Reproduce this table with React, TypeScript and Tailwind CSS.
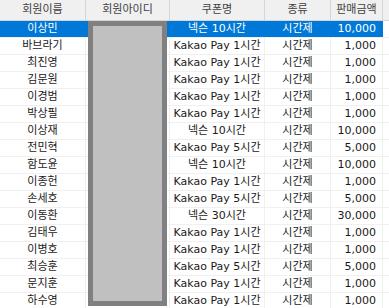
import React from "react";

const rows: [string, string, string, string][] = [
  ["이상민", "넥슨 10시간", "시간제", "10,000"],
  ["바브라기", "Kakao Pay 1시간", "시간제", "1,000"],
  ["최진영", "Kakao Pay 1시간", "시간제", "1,000"],
  ["김문원", "Kakao Pay 1시간", "시간제", "1,000"],
  ["이경범", "Kakao Pay 1시간", "시간제", "1,000"],
  ["박상필", "Kakao Pay 1시간", "시간제", "1,000"],
  ["이상재", "넥슨 10시간", "시간제", "10,000"],
  ["전민혁", "Kakao Pay 5시간", "시간제", "5,000"],
  ["함도윤", "넥슨 10시간", "시간제", "10,000"],
  ["이종헌", "Kakao Pay 1시간", "시간제", "1,000"],
  ["손세호", "Kakao Pay 5시간", "시간제", "5,000"],
  ["이동환", "넥슨 30시간", "시간제", "30,000"],
  ["김태우", "Kakao Pay 1시간", "시간제", "1,000"],
  ["이병호", "Kakao Pay 1시간", "시간제", "1,000"],
  ["최승훈", "Kakao Pay 5시간", "시간제", "5,000"],
  ["문지훈", "Kakao Pay 1시간", "시간제", "1,000"],
  ["하수영", "Kakao Pay 1시간", "시간제", "1,000"],
];

const font = { fontFamily: '"DejaVu Sans", "Noto Sans CJK KR", sans-serif' };

export default function App() {
  return (
    <div
      className="relative w-[389px] h-[308px] overflow-hidden bg-white text-[11px] text-[#1a1a1a]"
      style={font}
    >
      <div className="flex h-[21px] bg-[#f0f0f0] border-b border-[#d5d5d5] text-[#404040]">
        <div className="w-[86px] flex items-center justify-center border-r border-[#d5d5d5]">회원이름</div>
        <div className="w-[84px] flex items-center justify-center border-r border-[#d5d5d5]">회원아이디</div>
        <div className="w-[95px] flex items-center justify-center border-r border-[#d5d5d5]">쿠폰명</div>
        <div className="w-[66px] flex items-center justify-center border-r border-[#d5d5d5]">종류</div>
        <div className="w-[52px] flex items-center justify-center border-r border-[#d5d5d5]">판매금액</div>
        <div className="flex-1" />
      </div>
      {rows.map((r, i) => {
        const sel = i === 0;
        const cell = sel
          ? "bg-[#0078d7] text-white border-r border-[#0078d7]"
          : "border-r border-[#f0f0f0]";
        return (
          <div key={i} className="flex h-[17px] border-b border-[#f0f0f0]">
            <div className={`w-[86px] flex items-center justify-center ${cell}`}>{r[0]}</div>
            <div className={`w-[84px] ${cell}`} />
            <div className={`w-[95px] flex items-center justify-center whitespace-nowrap ${cell}`}>{r[1]}</div>
            <div className={`w-[66px] flex items-center justify-center ${cell}`}>{r[2]}</div>
            <div className={`w-[52px] flex items-center justify-end pr-[6px] ${cell}`}>{r[3]}</div>
            <div className="flex-1" />
          </div>
        );
      })}
      <div className="absolute left-[88px] top-[21px] w-[79px] h-[285px] bg-[#808080] p-[5px]">
        <div className="w-full h-full bg-[#c0c0c0]" />
      </div>
    </div>
  );
}
